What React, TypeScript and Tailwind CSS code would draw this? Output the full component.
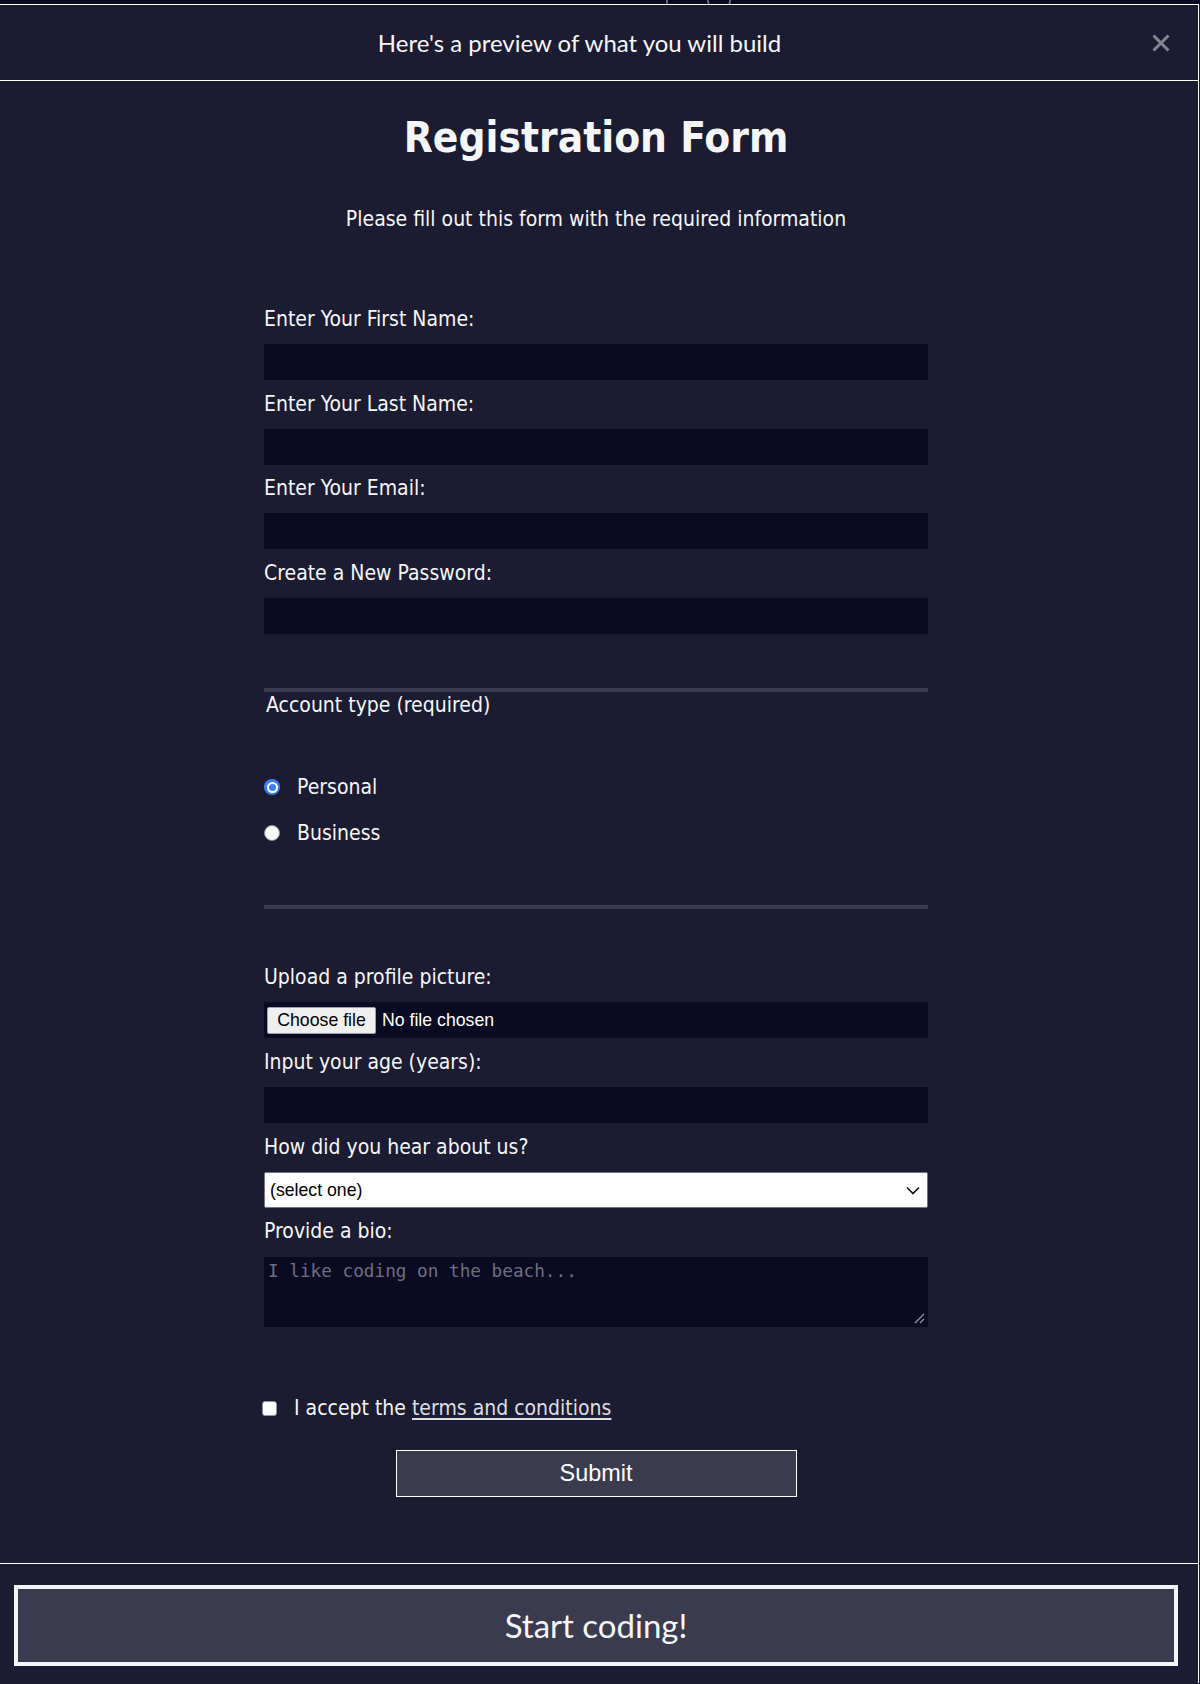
import type { ReactNode } from 'react';

const tahoma = "font-['DejaVu_Sans_Condensed','DejaVu_Sans',sans-serif]";
const arial = "font-['Liberation_Sans',Arial,sans-serif]";
const lato = "font-['Lato','Open_Sans',sans-serif]";

function Label({ children, className = '' }: { children: ReactNode; className?: string }) {
  return <label className={`block text-[21px] leading-[26px] text-[#f5f6f7] ${className}`}>{children}</label>;
}

function TextBox({ className = '' }: { className?: string }) {
  return <input type="text" className={`block h-[36px] w-full border border-[#0a0a23] bg-[#0a0a23] text-white outline-none ${className}`} />;
}

function Radio({ checked, label, className = '' }: { checked?: boolean; label: string; className?: string }) {
  return (
    <div className={`flex h-[26px] items-center ${className}`}>
      {checked ? (
        <span className="flex h-[16px] w-[16px] items-center justify-center rounded-full bg-[#3c7ef3]">
          <span className="flex h-[11px] w-[11px] items-center justify-center rounded-full bg-white">
            <span className="h-[7px] w-[7px] rounded-full bg-[#3c7ef3]" />
          </span>
        </span>
      ) : (
        <span className="h-[16px] w-[16px] rounded-full border border-[#8f8f9d] bg-white" />
      )}
      <span className="ml-[17px] text-[21px] leading-[26px]">{label}</span>
    </div>
  );
}

export default function App() {
  return (
    <div className="min-h-[1684px] w-[1200px] bg-[#1b1b32]">
      {/* strip of the page behind the modal */}
      <div className="relative h-[4px] overflow-hidden bg-[#0a0a23]">
        <svg className="absolute left-[662px] top-[-10px]" width="72" height="16" viewBox="0 0 72 16" fill="none" stroke="#858591" strokeWidth="1.5">
          <path d="M5 0v14" />
          <path d="M48 2c-3 4-3 10 0 14" />
          <path d="M66 2c3 4 3 10 0 14" />
        </svg>
      </div>

      <div className="w-[1199px] border-r border-t border-white bg-[#1b1b32]">
        <header className={`flex h-[76px] items-center border-b border-white ${lato}`}>
          <h2 className="flex-1 pl-[10px] text-center text-[24px] font-normal text-[#f5f6f7]">Here's a preview of what you will build</h2>
          <button type="button" aria-label="Close" className="mr-[25px] flex h-[24px] w-[24px] items-center justify-center">
            <svg width="18" height="18" viewBox="0 0 18 18" stroke="#858591" strokeWidth="3" strokeLinecap="butt">
              <path d="M1.5 1.5l15 15M16.5 1.5l-15 15" />
            </svg>
          </button>
        </header>

        <main className={`h-[1482px] w-[1192px] text-[#f5f6f7] ${tahoma}`}>
          <h1 className="pt-[31px] text-center text-[42px] font-bold leading-[52px]">Registration Form</h1>
          <p className="mt-[42px] text-center text-[21px] leading-[26px]">Please fill out this form with the required information</p>

          <form className="mx-auto w-[664px]" onSubmit={(e) => e.preventDefault()}>
            <Label className="mt-[74px]">Enter Your First Name:</Label>
            <TextBox className="mt-[12px]" />
            <Label className="mt-[11px]">Enter Your Last Name:</Label>
            <TextBox className="mt-[12px]" />
            <Label className="mt-[10px]">Enter Your Email:</Label>
            <TextBox className="mt-[12px]" />
            <Label className="mt-[11px]">Create a New Password:</Label>
            <TextBox className="mt-[12px]" />

            <div className="mt-[54px] h-[4px] bg-[#3b3b4f]" />
            <div className="h-[26px] pl-[2px] text-[21px] leading-[26px]">Account type (required)</div>
            <Radio checked label="Personal" className="mt-[56px]" />
            <Radio label="Business" className="mt-[20px]" />
            <div className="mt-[59px] h-[4px] bg-[#3b3b4f]" />

            <Label className="mt-[55px]">Upload a profile picture:</Label>
            <div className={`mt-[12px] flex h-[36px] items-center bg-[#0a0a23] pl-[3px] text-[17.7px] ${arial}`}>
              <span className="flex h-[27px] w-[109px] items-center justify-center rounded-[2px] border border-[#a0a0aa] bg-[#efefef] text-black">Choose file</span>
              <span className="ml-[6px] text-white">No file chosen</span>
            </div>
            <Label className="mt-[11px]">Input your age (years):</Label>
            <TextBox className="mt-[12px]" />
            <Label className="mt-[11px]">How did you hear about us?</Label>
            <div className={`mt-[12px] flex h-[36px] items-center justify-between rounded-[2px] border border-[#767676] bg-white pl-[5px] pr-[7px] text-[17.7px] text-black ${arial}`}>
              <span>(select one)</span>
              <svg width="14" height="9" viewBox="0 0 14 9" fill="none" stroke="#111" strokeWidth="1.6">
                <path d="M1 1.5l6 6 6-6" />
              </svg>
            </div>
            <Label className="mt-[10px]">Provide a bio:</Label>
            <div className="relative mt-[13px] h-[70px] bg-[#0a0a23] pl-[4px] pt-[3px] font-['DejaVu_Sans_Mono',monospace] text-[17.7px] leading-[22px] text-[#6f6f7d]">
              I like coding on the beach...
              <svg className="absolute bottom-[3px] right-[3px]" width="12" height="12" viewBox="0 0 12 12" stroke="#9a9aa5" strokeWidth="1.2">
                <path d="M11 2L2 11M11 7L7 11" />
              </svg>
            </div>

            <div className="mt-[68px] flex h-[26px] items-center">
              <span className="h-[15px] w-[15px] rounded-[3px] border border-[#8f8f9d] bg-white" style={{ marginLeft: -2 }} />
              <span className="ml-[17px] text-[21px] leading-[26px]">
                I accept the{' '}
                <a href="#" className="text-[#dfdfe2] underline underline-offset-[3px]">
                  terms and conditions
                </a>
              </span>
            </div>
            <button type="submit" className={`mx-auto mt-[29px] block h-[47px] w-[401px] border border-white bg-[#3b3b4f] text-[23.4px] text-white ${arial}`}>
              Submit
            </button>
          </form>
        </main>

        <footer className="h-[120px] border-t border-white pt-[21px]">
          <button type="button" className={`ml-[14px] flex h-[81px] w-[1164px] items-center justify-center border-4 border-[#f5f6f7] bg-[#3b3b4f] text-[33px] text-[#f5f6f7] ${lato}`}>
            Start coding!
          </button>
        </footer>
      </div>
    </div>
  );
}
